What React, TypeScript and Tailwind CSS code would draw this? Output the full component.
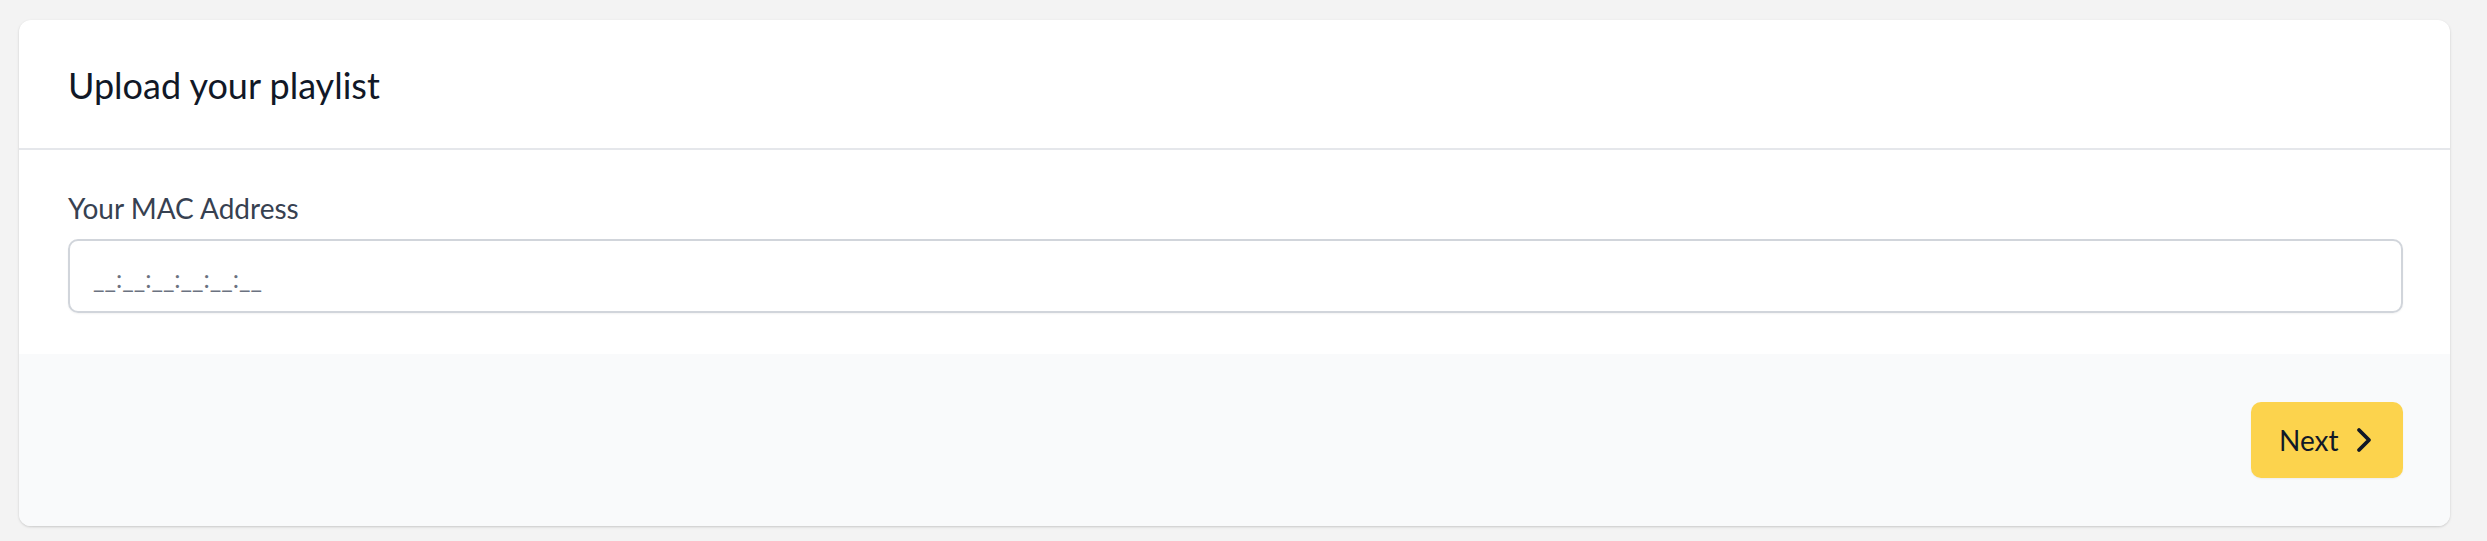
import { ChevronRight } from "lucide-react";

const App = () => {
  return (
    <div className="min-h-screen w-full bg-[#f3f3f3] pl-[19px] pr-[37px] pt-[20px] pb-[15px] font-['Lato',sans-serif]">
      <div className="rounded-[12px] bg-white shadow-[0_1px_3px_rgba(0,0,0,0.12),0_1px_2px_rgba(0,0,0,0.06)] overflow-hidden">
        <div className="h-[130px] flex items-center px-[49px] border-b-2 border-[#e5e7eb]">
          <h2 className="text-[36px] leading-[40px] text-[#111827] pt-[1px]">Upload your playlist</h2>
        </div>
        <div className="px-[49px] pr-[47px] pt-[40px] pb-[41px]">
          <label className="block text-[28px] leading-[36px] text-[#374151] mb-[13px]">Your MAC Address</label>
          <input
            className="w-full h-[74px] rounded-[10px] border-2 border-[#d1d5db] shadow-[0_1px_2px_rgba(0,0,0,0.05)] px-[23px] pt-[4px] text-[25px] text-[#111827] placeholder:text-[#6b7280] outline-none"
            placeholder="__:__:__:__:__:__"
          />
        </div>
        <div className="h-[172px] bg-[#f9fafb] flex items-center justify-end px-[47px]">
          <button className="h-[76px] w-[152px] rounded-[10px] bg-[#fcd34d] flex items-center pl-[28px] gap-[5px] text-[28px] text-[#111827] shadow-[0_1px_2px_rgba(0,0,0,0.05)]">
            <span>Next</span>
            <ChevronRight size={40} strokeWidth={2.3} className="text-[#111827]" />
          </button>
        </div>
      </div>
    </div>
  );
};

export default App;
